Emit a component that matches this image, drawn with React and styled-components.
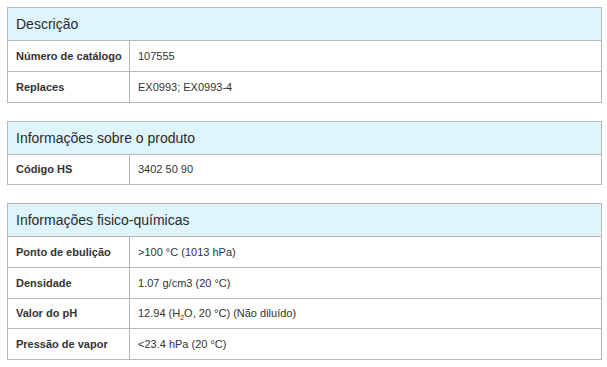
import React from "react";
import styled, { createGlobalStyle } from "styled-components";

const Global = createGlobalStyle`
  html, body { margin: 0; padding: 0; background: #fff; }
  body { font-family: "Liberation Sans", Arial, sans-serif; color: #333; }
`;

const Page = styled.div`
  padding: 7px 5px 0 7px;
  display: flex;
  flex-direction: column;
  gap: 18px;
`;

const Section = styled.section`
  border: 1px solid #b7b7b7;
  width: 593px;
`;

const Header = styled.div`
  background: #dff5fc;
  height: 32px;
  display: flex;
  align-items: center;
  padding-left: 8px;
  font-size: 14px;
  color: #2a2a2a;
`;

const Row = styled.div`
  display: grid;
  grid-template-columns: 122px 1fr;
  border-top: 1px solid #b7b7b7;
  height: ${(p) => (p.$tall ? "30px" : "29.5px")};
  font-size: 11px;
`;

const Label = styled.div`
  display: flex;
  align-items: center;
  padding-left: 8px;
  font-weight: bold;
  border-right: 1px solid #b7b7b7;
`;

const Value = styled.div`
  display: flex;
  align-items: center;
  padding-left: 8px;
`;

const Text = styled.span`
  white-space: pre;
`;

const Sub = styled.sub`
  font-size: 7px;
  vertical-align: -3px;
  line-height: 0;
`;

const data = [
  {
    title: "Descrição",
    rows: [
      ["Número de catálogo", "107555"],
      ["Replaces", "EX0993; EX0993-4"],
    ],
  },
  {
    title: "Informações sobre o produto",
    rows: [["Código HS", "3402 50 90"]],
  },
  {
    title: "Informações fisico-químicas",
    rows: [
      ["Ponto de ebulição", ">100 °C (1013 hPa)"],
      ["Densidade", "1.07 g/cm3 (20 °C)"],
      [
        "Valor do pH",
        <>
          12.94 (H<Sub>2</Sub>O, 20 °C) (Não diluído)
        </>,
      ],
      ["Pressão de vapor", "<23.4 hPa (20 °C)"],
    ],
  },
];

export default function App() {
  return (
    <>
      <Global />
      <Page>
        {data.map((s) => (
          <Section key={s.title}>
            <Header>{s.title}</Header>
            {s.rows.map(([l, v], i) => (
              <Row key={l} $tall={i % 2 === 1}>
                <Label>{l}</Label>
                <Value>
                  <Text>{v}</Text>
                </Value>
              </Row>
            ))}
          </Section>
        ))}
      </Page>
    </>
  );
}
